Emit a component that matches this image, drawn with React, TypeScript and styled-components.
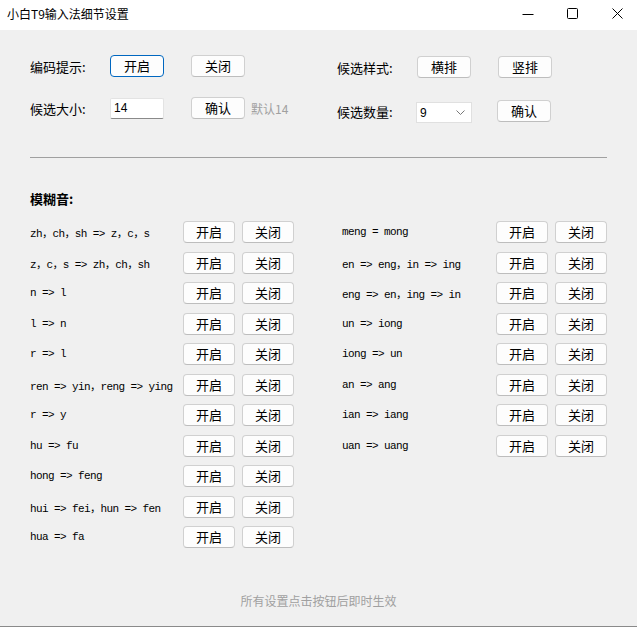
import styled, { createGlobalStyle } from 'styled-components'

const GlobalStyle = createGlobalStyle`
    html, body {
        margin: 0;
        padding: 0;
        background: #f0f0f0;
    }
    * {
        box-sizing: border-box;
    }
`

const leftRules = [
    'zh，ch，sh => z，c，s',
    'z，c，s => zh，ch，sh',
    'n => l',
    'l => n',
    'r => l',
    'ren => yin，reng => ying',
    'r => y',
    'hu => fu',
    'hong => feng',
    'hui => fei，hun => fen',
    'hua => fa',
]

const rightRules = [
    'meng = mong',
    'en => eng，in => ing',
    'eng => en，ing => in',
    'un => iong',
    'iong => un',
    'an => ang',
    'ian => iang',
    'uan => uang',
]

function RuleColumn({ rules, labelWidth }: { rules: string[], labelWidth: number }) {
    return <RuleList>
        {rules.map(rule => (
            <RuleRow key={rule} $labelWidth={labelWidth}>
                <RuleLabel>{rule}</RuleLabel>
                <ToggleButton>开启</ToggleButton>
                <ToggleButton>关闭</ToggleButton>
            </RuleRow>
        ))}
    </RuleList>
}

export default function App() {
    return <Window>
        <GlobalStyle />
        <TitleBar>
            <Title>小白T9输入法细节设置</Title>
            <Controls>
                <Control>
                    <svg width="12" height="12" viewBox="0 0 12 12">
                        <line x1="0.5" y1="6.5" x2="11.5" y2="6.5" stroke="#000" strokeWidth="1" />
                    </svg>
                </Control>
                <Control>
                    <svg width="11" height="11" viewBox="0 0 11 11">
                        <rect x="0.5" y="0.5" width="10" height="10" rx="1" fill="none" stroke="#000" strokeWidth="1" />
                    </svg>
                </Control>
                <Control>
                    <svg width="11" height="11" viewBox="0 0 11 11">
                        <path d="M0.5 0.5 L10.5 10.5 M10.5 0.5 L0.5 10.5" stroke="#000" strokeWidth="1" />
                    </svg>
                </Control>
            </Controls>
        </TitleBar>

        <Body>
            <TopSection>
                <SettingColumn $gap={20}>
                    <SettingRow>
                        <SettingLabel>编码提示:</SettingLabel>
                        <Button $primary>开启</Button>
                        <Button>关闭</Button>
                    </SettingRow>
                    <SettingRow>
                        <SettingLabel>候选大小:</SettingLabel>
                        <SizeInput defaultValue="14" />
                        <Button>确认</Button>
                        <Hint>默认14</Hint>
                    </SettingRow>
                </SettingColumn>

                <SettingColumn $gap={22} style={{ paddingTop: 1 }}>
                    <SettingRow>
                        <SettingLabel>候选样式:</SettingLabel>
                        <Button>横排</Button>
                        <Button>竖排</Button>
                    </SettingRow>
                    <SettingRow>
                        <SettingLabel>候选数量:</SettingLabel>
                        <Select>
                            <span>9</span>
                            <svg width="9" height="5" viewBox="0 0 9 5">
                                <path d="M0.5 0.5 L4.5 4.5 L8.5 0.5" fill="none" stroke="#777" strokeWidth="1" />
                            </svg>
                        </Select>
                        <Button>确认</Button>
                    </SettingRow>
                </SettingColumn>
            </TopSection>

            <Divider />

            <SectionHeader>模糊音:</SectionHeader>

            <RuleGrid>
                <RuleColumn rules={leftRules} labelWidth={146} />
                <RuleColumn rules={rightRules} labelWidth={147} />
            </RuleGrid>

            <Footer>所有设置点击按钮后即时生效</Footer>
        </Body>
    </Window>
}

const uiFont = `"Noto Sans CJK SC", "Noto Sans", sans-serif`

const Window = styled.div`
    width: 637px;
    height: 627px;
    overflow: hidden;
    display: flex;
    flex-direction: column;
    background: #f0f0f0;
    border-bottom: 1px solid #8a8a8a;
    font-family: ${uiFont};
    color: #000;
`

const TitleBar = styled.div`
    height: 30px;
    flex-shrink: 0;
    background: #fff;
    display: flex;
    align-items: center;
    padding-left: 7px;
`

const Title = styled.div`
    font-size: 12px;
    line-height: 16px;
    margin-top: -3px;
`

const Controls = styled.div`
    margin-left: auto;
    margin-right: -3px;
    display: flex;
    height: 100%;
`

const Control = styled.div`
    width: 45px;
    height: 100%;
    display: flex;
    align-items: center;
    justify-content: center;
    padding-bottom: 3px;

    svg {
        display: block;
    }
`

const Body = styled.div`
    flex: 1;
    display: flex;
    flex-direction: column;
    padding: 25px 30px 17px 30px;
`

const TopSection = styled.div`
    display: grid;
    grid-template-columns: 307px 1fr;
`

const SettingColumn = styled.div<{ $gap: number }>`
    display: flex;
    flex-direction: column;
    gap: ${p => p.$gap}px;
`

const SettingRow = styled.div`
    display: flex;
    align-items: center;
    height: 22px;
    gap: 27px;
`

const SettingLabel = styled.div`
    width: 53px;
    font-size: 13px;
    white-space: nowrap;
`

const Button = styled.button<{ $primary?: boolean }>`
    width: 54px;
    height: 22px;
    padding: 0;
    background: #fdfdfd;
    border: 1px solid ${p => p.$primary ? '#0067c0' : '#d0d0d0'};
    border-bottom-color: ${p => p.$primary ? '#0067c0' : '#bdbdbd'};
    border-radius: 4px;
    font-family: ${uiFont};
    font-size: 13px;
    line-height: 18px;
    color: #000;
`

const SizeInput = styled.input`
    width: 54px;
    height: 21px;
    padding: 0 3px;
    background: #fff;
    border: 1px solid #e3e3e3;
    border-bottom-color: #8a8a8a;
    border-radius: 2px;
    font-family: "Liberation Sans", sans-serif;
    font-size: 12px;
    color: #000;
    outline: none;
`

const Hint = styled.div`
    margin-left: -21px;
    font-size: 12px;
    color: #a0a0a0;
`

const Select = styled.div`
    width: 56px;
    height: 21px;
    margin-left: -1px;
    margin-right: -2px;
    margin-top: 3px;
    padding: 0 6px 0 3px;
    background: #fff;
    border: 1px solid #e0e0e0;
    display: flex;
    align-items: center;
    justify-content: space-between;
    font-family: "Liberation Sans", sans-serif;
    font-size: 12px;
`

const Divider = styled.div`
    margin-top: 35px;
    height: 1px;
    background: #a0a0a0;
`

const SectionHeader = styled.div`
    margin-top: 31px;
    font-size: 13px;
    line-height: 20px;
    font-weight: 700;
`

const RuleGrid = styled.div`
    margin-top: 12px;
    display: grid;
    grid-template-columns: 312px 1fr;
    align-items: start;
`

const RuleList = styled.div`
    display: grid;
    grid-auto-rows: 22px;
    row-gap: 8.5px;
`

const RuleRow = styled.div<{ $labelWidth: number }>`
    display: grid;
    grid-template-columns: ${p => p.$labelWidth}px 52px 52px;
    column-gap: 7px;
    align-items: center;
`

const RuleLabel = styled.div`
    font-family: "Liberation Mono", "Noto Sans CJK SC", monospace;
    font-size: 11px;
    letter-spacing: -0.6px;
    white-space: nowrap;
`

const ToggleButton = styled(Button)`
    width: 52px;
`

const Footer = styled.div`
    margin-top: auto;
    text-align: center;
    font-size: 12px;
    line-height: 16px;
    color: #a0a0a0;
`
